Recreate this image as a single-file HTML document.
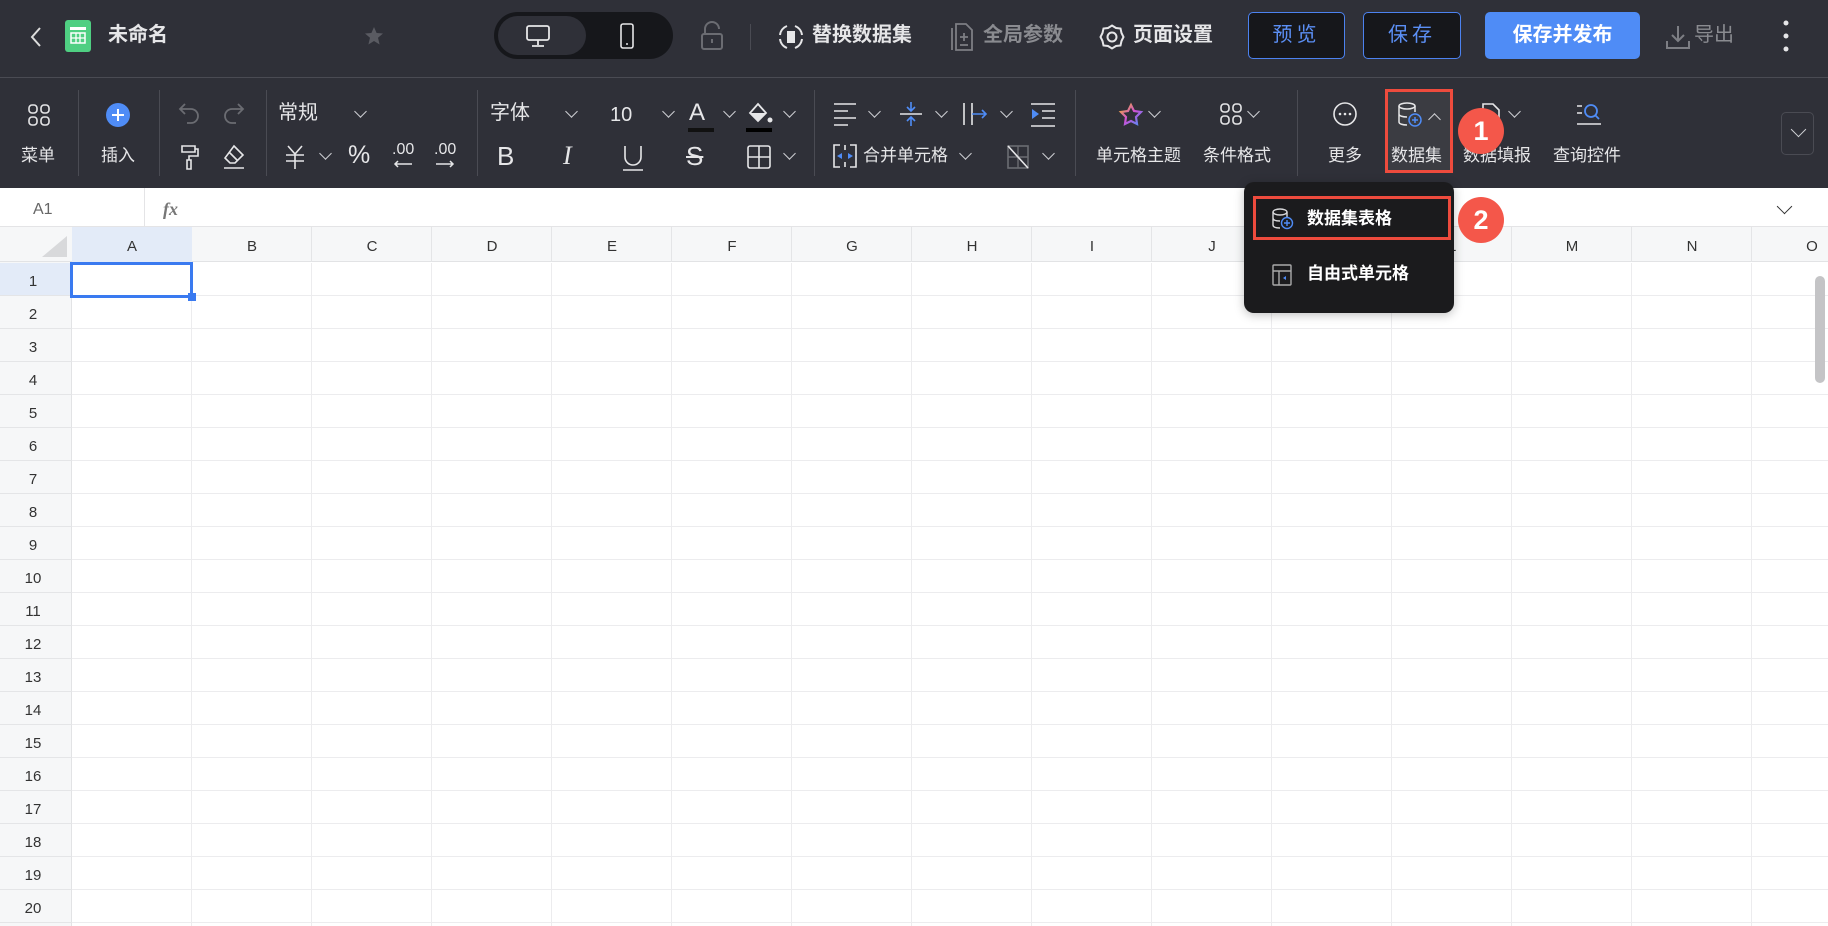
<!DOCTYPE html>
<html><head><meta charset="utf-8">
<style>
*{margin:0;padding:0;box-sizing:border-box}
body{width:1828px;height:926px;overflow:hidden;background:#fff;font-family:"Liberation Sans","Noto Sans CJK SC",sans-serif;position:relative}
.a{position:absolute}
.top{left:0;top:0;width:1828px;height:77px;background:#2f3038}
.tb{left:0;top:77px;width:1828px;height:111px;background:#2f3038;border-top:1px solid #4a4b53}
.t{position:absolute;color:#e6e6e8;white-space:nowrap;line-height:1}
.g{color:#8a8b90}
.lbl{font-size:17px;color:#e6e6e8}
.div{position:absolute;width:1px;background:#4a4b53}
svg{position:absolute;overflow:visible}
.chev{position:absolute;width:9px;height:9px;border-right:1.4px solid #cfd0d4;border-bottom:1.4px solid #cfd0d4;transform:rotate(45deg)}
.btn{position:absolute;top:12px;height:47px;border:1.5px solid #4c82f0;border-radius:5px;background:#16171b;color:#5b8ff5;font-size:20px;text-align:center;line-height:44px;letter-spacing:4px}
.ch{position:absolute;top:238px;font-size:15px;color:#333;width:120px;text-align:center}
.rh{position:absolute;left:0;width:66px;font-size:15px;color:#333;text-align:center}
</style></head><body>
<div class="a top"></div>
<svg style="left:28px;top:26px" width="16" height="22"><path d="M12 2 L4 11 L12 20" stroke="#ddd" stroke-width="2" fill="none"/></svg>
<div class="a" style="left:65px;top:20px;width:26px;height:32px;background:#4fcf82;border-radius:3px"></div>
<svg style="left:70px;top:27px" width="16" height="18"><rect x="0" y="0" width="16" height="3" fill="#fff"/><rect x="1" y="6" width="14" height="10" fill="none" stroke="#fff" stroke-width="1.5"/><path d="M1 11H15M6 6V16M10 6V16" stroke="#fff" stroke-width="1.3"/></svg>
<div class="t" style="left:108px;top:25px;font-size:20px;font-weight:bold">未命名</div>
<svg style="left:364px;top:26px" width="20" height="20"><path d="M10 1 L12.6 7 L19 7.5 L14 11.8 L15.6 18.5 L10 15 L4.4 18.5 L6 11.8 L1 7.5 L7.4 7 Z" fill="#5a5b62"/></svg>
<div class="a" style="left:494px;top:12px;width:179px;height:47px;background:#16171b;border-radius:24px"></div>
<div class="a" style="left:498px;top:16px;width:88px;height:39px;background:#2f3038;border-radius:20px"></div>
<svg style="left:526px;top:25px" width="24" height="22"><rect x="1" y="1" width="22" height="14" rx="2" fill="none" stroke="#e6e6e8" stroke-width="1.8"/><path d="M12 15V20M6 21H18" stroke="#e6e6e8" stroke-width="1.8"/></svg>
<svg style="left:620px;top:23px" width="14" height="26"><rect x="1" y="1" width="12" height="24" rx="2" fill="none" stroke="#e6e6e8" stroke-width="1.6"/><circle cx="7" cy="21" r="1" fill="#e6e6e8"/></svg>
<svg style="left:701px;top:22px" width="22" height="28"><path d="M4 12V7a7 7 0 0 1 14 0" stroke="#6b6c72" stroke-width="2" fill="none"/><rect x="1" y="12" width="20" height="15" rx="2" fill="none" stroke="#6b6c72" stroke-width="2"/><path d="M11 17V21" stroke="#6b6c72" stroke-width="2"/></svg>
<div class="div" style="left:750px;top:24px;height:26px"></div>
<svg style="left:778px;top:24px" width="26" height="26"><path d="M9 2a11 11 0 0 0-7 9M24 15a11 11 0 0 1-7 9M17 2a11 11 0 0 1 7 9M2 15a11 11 0 0 0 7 9" stroke="#e6e6e8" stroke-width="2" fill="none"/><rect x="9" y="7" width="8" height="12" fill="#e6e6e8"/></svg>
<div class="t" style="left:812px;top:25px;font-size:20px;font-weight:bold">替换数据集</div>
<svg style="left:951px;top:23px" width="22" height="28"><path d="M5 1H15L21 7V27H5Z M1 5V27" stroke="#7d7e84" stroke-width="1.8" fill="none"/><path d="M9 14H17M13 10V18M9 22H17" stroke="#7d7e84" stroke-width="1.8"/></svg>
<div class="t g" style="left:983px;top:25px;font-size:20px;font-weight:bold">全局参数</div>
<svg style="left:1099px;top:24px" width="26" height="26"><circle cx="13" cy="13" r="4.5" stroke="#e6e6e8" stroke-width="2" fill="none"/><path d="M13 1.5L17 4L21.5 4.5L22.5 9L24.5 13L22.5 17L21.5 21.5L17 22L13 24.5L9 22L4.5 21.5L3.5 17L1.5 13L3.5 9L4.5 4.5L9 4Z" stroke="#e6e6e8" stroke-width="2" fill="none"/></svg>
<div class="t" style="left:1133px;top:25px;font-size:20px;font-weight:bold">页面设置</div>
<div class="btn" style="left:1248px;width:97px">预览</div>
<div class="btn" style="left:1363px;width:98px">保存</div>
<div class="a" style="left:1485px;top:12px;width:155px;height:47px;background:#4f8cf6;border-radius:5px;color:#fff;font-size:20px;font-weight:bold;text-align:center;line-height:47px">保存并发布</div>
<svg style="left:1665px;top:24px" width="26" height="26"><path d="M13 2V17M7 11L13 17L19 11M2 17V24H24V17" stroke="#7d7e84" stroke-width="2" fill="none"/></svg>
<div class="t g" style="left:1694px;top:25px;font-size:20px">导出</div>
<svg style="left:1783px;top:20px" width="6" height="32"><circle cx="3" cy="3" r="2.5" fill="#e6e6e8"/><circle cx="3" cy="16" r="2.5" fill="#e6e6e8"/><circle cx="3" cy="29" r="2.5" fill="#e6e6e8"/></svg>

<div class="a tb"></div>
<svg style="left:28px;top:104px" width="22" height="22"><g stroke="#e6e6e8" stroke-width="1.6" fill="none"><rect x="1" y="1" width="8" height="8" rx="3"/><rect x="13" y="1" width="8" height="8" rx="3"/><rect x="1" y="13" width="8" height="8" rx="3"/><rect x="13" y="13" width="8" height="8" rx="3"/></g></svg>
<div class="t lbl" style="left:21px;top:147px">菜单</div>
<div class="div" style="left:78px;top:90px;height:86px"></div>
<svg style="left:106px;top:103px" width="24" height="24"><circle cx="12" cy="12" r="12" fill="#4f8cf6"/><path d="M12 6V18M6 12H18" stroke="#fff" stroke-width="2"/></svg>
<div class="t lbl" style="left:101px;top:147px">插入</div>
<div class="div" style="left:159px;top:90px;height:86px"></div>
<svg style="left:178px;top:102px" width="22" height="24"><path d="M7 2L2 7L7 12M2 7H13a7 7 0 0 1 0 14H9" stroke="#6b6c72" stroke-width="1.8" fill="none"/></svg>
<svg style="left:223px;top:102px" width="22" height="24"><path d="M15 2L20 7L15 12M20 7H9a7 7 0 0 0 0 14H13" stroke="#6b6c72" stroke-width="1.8" fill="none"/></svg>
<svg style="left:180px;top:144px" width="20" height="26"><path d="M2 2H15V8H2Z M15 5H18V12H9V16 M7 16H11V25H7Z" stroke="#e6e6e8" stroke-width="1.6" fill="none"/></svg>
<svg style="left:222px;top:144px" width="24" height="26"><path d="M12 2L21 11L13 19H8L3 14Z M7 8L16 17 M2 24H22" stroke="#e6e6e8" stroke-width="1.6" fill="none"/></svg>
<div class="div" style="left:266px;top:90px;height:86px"></div>
<div class="t" style="left:278px;top:103px;font-size:20px">常规</div>
<div class="chev" style="left:356px;top:107px"></div>
<svg style="left:283px;top:144px" width="24" height="26"><path d="M5 2L12 10L19 2M3 11H21M3 17H21M12 10V25" stroke="#e6e6e8" stroke-width="1.6" fill="none"/></svg>
<div class="chev" style="left:321px;top:149px"></div>
<div class="t" style="left:348px;top:143px;font-size:25px">%</div>
<div class="t" style="left:392px;top:142px;font-size:16px">.00</div>
<svg style="left:392px;top:160px" width="22" height="8"><path d="M20 4H3M6 1L3 4L6 7" stroke="#e6e6e8" stroke-width="1.5" fill="none"/></svg>
<div class="t" style="left:434px;top:142px;font-size:16px">.00</div>
<svg style="left:434px;top:160px" width="22" height="8"><path d="M2 4H19M16 1L19 4L16 7" stroke="#e6e6e8" stroke-width="1.5" fill="none"/></svg>
<div class="div" style="left:477px;top:90px;height:86px"></div>
<div class="t" style="left:490px;top:103px;font-size:20px">字体</div>
<div class="chev" style="left:567px;top:107px"></div>
<div class="t" style="left:610px;top:105px;font-size:20px">10</div>
<div class="chev" style="left:664px;top:107px"></div>
<div class="t" style="left:689px;top:101px;font-size:24px;font-weight:300">A</div>
<div class="a" style="left:688px;top:128px;width:26px;height:4px;background:#111"></div>
<div class="chev" style="left:725px;top:107px"></div>
<svg style="left:746px;top:101px" width="28" height="24"><path d="M4 12L12 3L20 12L12 20Z" stroke="#e6e6e8" stroke-width="1.8" fill="none"/><path d="M4 12H20L12 20Z" fill="#e6e6e8"/><circle cx="24" cy="19" r="2.5" fill="#e6e6e8"/></svg>
<div class="a" style="left:746px;top:128px;width:26px;height:4px;background:#000"></div>
<div class="chev" style="left:785px;top:107px"></div>
<div class="t" style="left:497px;top:143px;font-size:26px">B</div>
<div class="t" style="left:563px;top:143px;font-size:26px;font-family:'Liberation Serif',serif;font-style:italic">I</div>
<svg style="left:622px;top:145px" width="22" height="26"><path d="M3 1V12a8 8 0 0 0 16 0V1M1 25H21" stroke="#e6e6e8" stroke-width="1.6" fill="none"/></svg>
<div class="t" style="left:686px;top:143px;font-size:26px;text-decoration:line-through">S</div>
<svg style="left:747px;top:145px" width="24" height="24"><rect x="1" y="1" width="22" height="22" rx="2" stroke="#e6e6e8" stroke-width="1.6" fill="none"/><path d="M12 1V23M1 12H23" stroke="#e6e6e8" stroke-width="1.6"/></svg>
<div class="chev" style="left:785px;top:149px"></div>
<div class="div" style="left:814px;top:90px;height:86px"></div>
<svg style="left:833px;top:102px" width="24" height="24"><path d="M1 2H23M1 9H15M1 16H23M1 23H15" stroke="#e6e6e8" stroke-width="1.6"/></svg>
<div class="chev" style="left:870px;top:107px"></div>
<svg style="left:899px;top:101px" width="24" height="26"><path d="M1 13H23" stroke="#e6e6e8" stroke-width="1.6"/><path d="M12 1V9M8 6L12 10L16 6M12 25V17M8 20L12 16L16 20" stroke="#4f8cf6" stroke-width="1.6" fill="none"/></svg>
<div class="chev" style="left:937px;top:107px"></div>
<svg style="left:962px;top:102px" width="26" height="24"><path d="M2 1V23M10 1V23" stroke="#e6e6e8" stroke-width="1.6"/><path d="M10 12H24M20 8L24 12L20 16" stroke="#4f8cf6" stroke-width="1.6" fill="none"/></svg>
<div class="chev" style="left:1002px;top:107px"></div>
<svg style="left:1030px;top:102px" width="26" height="26"><path d="M1 2H25M12 9H25M12 16H25M1 24H25" stroke="#e6e6e8" stroke-width="1.6"/><path d="M2 7L9 12L2 17Z" fill="#4f8cf6"/></svg>
<svg style="left:833px;top:144px" width="24" height="24"><path d="M7 1H1V23H7M17 1H23V23H17M12 1V6M12 18V23" stroke="#e6e6e8" stroke-width="1.6" fill="none"/><path d="M4 12L9 9V15ZM20 12L15 9V15Z" fill="#4f8cf6"/></svg>
<div class="t lbl" style="left:863px;top:147px">合并单元格</div>
<div class="chev" style="left:961px;top:149px"></div>
<svg style="left:1007px;top:145px" width="22" height="24"><rect x="1" y="1" width="20" height="22" stroke="#6b6c72" stroke-width="1.6" fill="none"/><path d="M1 12H21M11 1V23" stroke="#6b6c72" stroke-width="1.4"/><path d="M1 1L21 23" stroke="#e6e6e8" stroke-width="1.6"/></svg>
<div class="chev" style="left:1044px;top:149px"></div>
<div class="div" style="left:1075px;top:90px;height:86px"></div>
<svg style="left:1119px;top:101px" width="24" height="26"><defs><linearGradient id="gr" x1="0" y1="0" x2="1" y2="1"><stop offset="0" stop-color="#f0b429"/><stop offset=".5" stop-color="#d14fd6"/><stop offset="1" stop-color="#4f8cf6"/></linearGradient></defs><path d="M12 4L15 10L22 11L17 16L18 23L12 20L6 23L7 16L2 11L9 10Z" stroke="url(#gr)" stroke-width="2.2" fill="none"/></svg>
<div class="chev" style="left:1150px;top:107px"></div>
<div class="t lbl" style="left:1096px;top:147px">单元格主题</div>
<svg style="left:1220px;top:103px" width="22" height="22"><g stroke="#e6e6e8" stroke-width="1.6" fill="none"><rect x="1" y="1" width="8" height="8" rx="3"/><rect x="13" y="1" width="8" height="8" rx="3"/><rect x="1" y="13" width="8" height="8" rx="3"/><rect x="13" y="13" width="8" height="8" rx="3"/></g></svg>
<div class="chev" style="left:1249px;top:107px"></div>
<div class="t lbl" style="left:1203px;top:147px">条件格式</div>
<div class="div" style="left:1297px;top:90px;height:86px"></div>
<svg style="left:1333px;top:102px" width="24" height="24"><circle cx="12" cy="12" r="11" stroke="#e6e6e8" stroke-width="1.6" fill="none"/><circle cx="7" cy="12" r="1.3" fill="#e6e6e8"/><circle cx="12" cy="12" r="1.3" fill="#e6e6e8"/><circle cx="17" cy="12" r="1.3" fill="#e6e6e8"/></svg>
<div class="t lbl" style="left:1328px;top:147px">更多</div>
<div class="a" style="left:1385px;top:89px;width:68px;height:84px;background:#3b3c42;border:3px solid #ee4b3d"></div>
<svg style="left:1398px;top:102px" width="26" height="26"><ellipse cx="9" cy="4" rx="8" ry="3" stroke="#e6e6e8" stroke-width="1.5" fill="none"/><path d="M1 4V20c0 2 4 3 8 3M17 4V10M1 12c0 2 4 3 8 3" stroke="#e6e6e8" stroke-width="1.5" fill="none"/><circle cx="17" cy="18" r="6" stroke="#4f8cf6" stroke-width="1.5" fill="#3b3c42"/><path d="M17 15V21M14 18H20" stroke="#4f8cf6" stroke-width="1.5"/></svg>
<div class="chev" style="left:1430px;top:115px;transform:rotate(-135deg)"></div>
<div class="t lbl" style="left:1391px;top:147px">数据集</div>
<svg style="left:1480px;top:103px" width="24" height="24"><path d="M3 1H13L19 7V23H3Z" stroke="#e6e6e8" stroke-width="1.6" fill="none"/></svg>
<div class="chev" style="left:1510px;top:107px"></div>
<div class="t lbl" style="left:1463px;top:147px">数据填报</div>
<svg style="left:1576px;top:102px" width="26" height="24"><path d="M1 4H6M1 11H6M1 22H25" stroke="#e6e6e8" stroke-width="1.6"/><circle cx="15" cy="9" r="6" stroke="#4f8cf6" stroke-width="1.8" fill="none"/><path d="M19 13L23 17" stroke="#4f8cf6" stroke-width="1.8"/></svg>
<div class="t lbl" style="left:1553px;top:147px">查询控件</div>
<div class="a" style="left:1458px;top:108px;width:46px;height:46px;border-radius:50%;background:#f4574a;color:#fff;font-size:27px;text-align:center;line-height:46px;font-weight:bold">1</div>
<div class="a" style="left:1781px;top:112px;width:33px;height:43px;border:1px solid #4a4b53;border-radius:5px"></div>
<div class="chev" style="left:1793px;top:124px;width:11px;height:11px"></div>

<div class="a" style="left:0;top:188px;width:1828px;height:39px;background:#fff;border-bottom:1px solid #e4e4e6"></div>
<div class="t" style="left:33px;top:202px;font-size:16px;color:#666">A1</div>
<div class="div" style="left:144px;top:188px;height:38px;background:#e4e4e6"></div>
<div class="t" style="left:163px;top:200px;font-size:18px;color:#777;font-family:'Liberation Serif',serif;font-style:italic;font-weight:bold">fx</div>
<div class="chev" style="left:1779px;top:201px;width:11px;height:11px;border-color:#333"></div>

<div class="a" style="left:0;top:227px;width:1828px;height:35px;background:#f6f7f8;border-bottom:1px solid #e2e3e5"></div>
<div class="a" style="left:0;top:262px;width:72px;height:664px;background:#f6f7f8;border-right:1px solid #e2e3e5"></div>
<div class="a" style="left:72px;top:227px;width:120px;height:35px;background:#e3ebf8"></div>
<div class="a" style="left:0;top:263px;width:72px;height:33px;background:#e3ebf8"></div>
<svg style="left:42px;top:236px" width="25" height="21"><path d="M25 0V21H0Z" fill="#d8d9db"/></svg>
<div class="a" style="left:192px;top:227px;width:1636px;height:35px;background:repeating-linear-gradient(90deg,transparent 0 119px,#e4e5e7 119px 120px)"></div>
<div class="a" style="left:72px;top:263px;width:1756px;height:663px;background:repeating-linear-gradient(90deg,transparent 0 119px,#ececee 119px 120px),repeating-linear-gradient(180deg,transparent 0 32px,#ececee 32px 33px)"></div>
<div class="a" style="left:0;top:263px;width:72px;height:663px;background:repeating-linear-gradient(180deg,transparent 0 32px,#e4e5e7 32px 33px)"></div>

<div class="ch" style="left:72px">A</div><div class="ch" style="left:192px">B</div><div class="ch" style="left:312px">C</div><div class="ch" style="left:432px">D</div><div class="ch" style="left:552px">E</div><div class="ch" style="left:672px">F</div><div class="ch" style="left:792px">G</div><div class="ch" style="left:912px">H</div><div class="ch" style="left:1032px">I</div><div class="ch" style="left:1152px">J</div><div class="ch" style="left:1272px">K</div><div class="ch" style="left:1392px">L</div><div class="ch" style="left:1512px">M</div><div class="ch" style="left:1632px">N</div><div class="ch" style="left:1752px">O</div>

<div class="rh" style="top:273px">1</div><div class="rh" style="top:306px">2</div><div class="rh" style="top:339px">3</div><div class="rh" style="top:372px">4</div><div class="rh" style="top:405px">5</div><div class="rh" style="top:438px">6</div><div class="rh" style="top:471px">7</div><div class="rh" style="top:504px">8</div><div class="rh" style="top:537px">9</div><div class="rh" style="top:570px">10</div><div class="rh" style="top:603px">11</div><div class="rh" style="top:636px">12</div><div class="rh" style="top:669px">13</div><div class="rh" style="top:702px">14</div><div class="rh" style="top:735px">15</div><div class="rh" style="top:768px">16</div><div class="rh" style="top:801px">17</div><div class="rh" style="top:834px">18</div><div class="rh" style="top:867px">19</div><div class="rh" style="top:900px">20</div>

<div class="a" style="left:70px;top:262px;width:123px;height:36px;border:3px solid #3a7af0"></div>
<div class="a" style="left:188px;top:293px;width:8px;height:8px;background:#3a7af0"></div>
<div class="a" style="left:1815px;top:276px;width:10px;height:107px;background:#c4c4c6;border-radius:5px"></div>

<div class="a" style="left:1244px;top:182px;width:210px;height:131px;background:#1b1b1d;border-radius:10px;box-shadow:0 2px 10px rgba(0,0,0,.25)"></div>
<div class="a" style="left:1253px;top:196px;width:198px;height:44px;border:3px solid #ee4b3d"></div>
<svg style="left:1272px;top:208px" width="22" height="22"><ellipse cx="8" cy="4" rx="7" ry="3" stroke="#d8d8da" stroke-width="1.4" fill="none"/><path d="M1 4V17c0 2 3 3 7 3M15 4V9M1 10c0 2 3 3 7 3" stroke="#d8d8da" stroke-width="1.4" fill="none"/><circle cx="15" cy="15" r="5.5" stroke="#4f8cf6" stroke-width="1.4" fill="#1b1b1d"/><path d="M15 12V18M12 15H18" stroke="#4f8cf6" stroke-width="1.4"/></svg>
<div class="t" style="left:1307px;top:210px;font-size:17px;color:#fff;font-weight:bold">数据集表格</div>
<svg style="left:1272px;top:264px" width="20" height="22"><rect x="1" y="1" width="18" height="20" rx="1" stroke="#aaa" stroke-width="1.4" fill="none"/><path d="M1 7H19M7 7V21" stroke="#aaa" stroke-width="1.4"/><path d="M14 12L11 14L14 16Z" fill="#4f8cf6"/></svg>
<div class="t" style="left:1307px;top:265px;font-size:17px;color:#fff;font-weight:bold">自由式单元格</div>
<div class="a" style="left:1458px;top:197px;width:46px;height:46px;border-radius:50%;background:#f4574a;color:#fff;font-size:27px;text-align:center;line-height:46px;font-weight:bold">2</div>
</body></html>
